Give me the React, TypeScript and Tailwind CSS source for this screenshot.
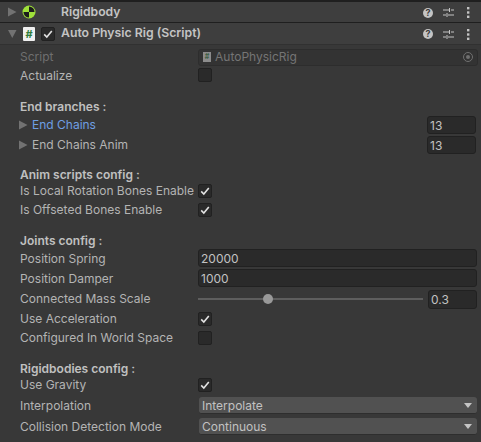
import type { ReactNode } from 'react';

const Arrow = ({ open = false }: { open?: boolean }) => (
  <svg width="10" height="10" viewBox="0 0 10 10" className="shrink-0">
    <path d={open ? 'M0 1h8.500L4.250 9z' : 'M0 .5v9L8.500 5z'} fill="#727272" />
  </svg>
);

const Check = () => (
  <svg width="10" height="10" viewBox="0 0 10 10">
    <path d="M1.2 5.400 3.800 8 8.800 2" fill="none" stroke="#e2e2e2" strokeWidth="1.600" />
  </svg>
);

const Checkbox = ({ checked = false }: { checked?: boolean }) => (
  <div className="w-[14px] h-[14px] rounded-[2px] bg-[#2a2a2a] border border-[#212121] flex items-center justify-center">
    {checked && <Check />}
  </div>
);

const HeaderIcons = () => (
  <div className="ml-auto flex items-center pr-[11px] mt-[1px]">
    <div className="w-[10px] h-[10px] rounded-full bg-[#c4c4c4] text-[#3e3e3e] text-[9px] leading-[10px] font-bold text-center">?</div>
    <svg width="11" height="11" viewBox="0 0 11 11" className="ml-[10px]">
      <path d="M0 3h6M8 3h3M0 8h3M5 8h6M6.500 1v4M4 6v4" stroke="#c4c4c4" strokeWidth="1" fill="none" />
    </svg>
    <svg width="3" height="11" viewBox="0 0 3 11" className="ml-[13px]">
      <rect x="0" y="0" width="2.400" height="2.400" fill="#c4c4c4" />
      <rect x="0" y="4.300" width="2.400" height="2.400" fill="#c4c4c4" />
      <rect x="0" y="8.600" width="2.400" height="2.400" fill="#c4c4c4" />
    </svg>
  </div>
);

const Row = ({ label, h = 'h-[18px]', dim = false, nudge = false, children }: { label: string; h?: string; dim?: boolean; nudge?: boolean; children?: ReactNode }) => (
  <div className={`flex items-center pl-[20px] ${h}`}>
    <div className={`w-[178px] shrink-0 whitespace-nowrap ${nudge ? 'pt-[2px]' : ''} ${dim ? 'text-[#6f6f6f]' : 'text-[#b4b4b4]'}`}>{label}</div>
    {children}
  </div>
);

const Heading = ({ text, className }: { text: string; className: string }) => (
  <div className={`pl-[20px] h-[14px] leading-[14px] font-semibold text-[#c0c0c0] ${className}`}>{text}</div>
);

const Field = ({ value }: { value: string }) => (
  <div className="flex-1 mr-[4px] h-[18px] leading-[17px] rounded-[3px] bg-[#2a2a2a] border border-[#212121] px-[2px] text-[#c2c2c2]">{value}</div>
);

const Dropdown = ({ value }: { value: string }) => (
  <div className="flex-1 ml-[1px] mr-[4px] h-[17px] rounded-[3px] bg-[#515151] border-b border-[#2e2e2e] pl-[3px] pr-[5px] text-[#c2c2c2] flex items-center justify-between">
    <span className="pt-[2px]">{value}</span>
    <svg width="8" height="5" viewBox="0 0 8 5"><path d="M0 0h8L4 5z" fill="#c4c4c4" /></svg>
  </div>
);

const Foldout = ({ label, blue = false, className = '' }: { label: string; blue?: boolean; className?: string }) => (
  <div className={`flex items-center h-[18px] pl-[19px] ${className}`}>
    <Arrow />
    <div className={`ml-[3px] ${blue ? 'text-[#6f9fe3]' : 'text-[#b4b4b4]'}`}>{label}</div>
    <div className="ml-auto mr-[5px] w-[49px] h-[18px] leading-[17px] rounded-[3px] bg-[#2a2a2a] border border-[#212121] px-[2px] text-[#c2c2c2]">13</div>
  </div>
);

export default function App() {
  return (
    <div className="w-[481px] h-[442px] overflow-hidden bg-[#383838] text-[12px] font-['Inter',sans-serif]">
      <div className="h-[2px] bg-[#1f1f1f]" />
      <div className="h-[21px] bg-[#3e3e3e] flex items-center pl-[8px] border-b border-[#1f1f1f]">
        <Arrow />
        <svg width="14" height="14" viewBox="0 0 14 14" className="ml-[4px]">
          <circle cx="7" cy="7" r="6.500" fill="#9fe03a" />
          <path d="M7 7V1.500A5.500 5.500 0 0 1 12.500 7zM7 7v5.500A5.500 5.500 0 0 1 1.500 7z" fill="#1c1c1c" />
        </svg>
        <div className="ml-[25px] font-semibold text-[#c4c4c4] text-[12.200px]">Rigidbody</div>
        <HeaderIcons />
      </div>
      <div className="h-[22px] bg-[#3e3e3e] flex items-center pl-[8px] border-b border-[#313131]">
        <Arrow open />
        <div className="ml-[5px] w-[12px] h-[14px] rounded-[1px] bg-[#f0f0f0] text-[#2f7d3a] text-[11px] leading-[14px] font-bold text-center">#</div>
        <div className="ml-[6px] w-[14px] h-[14px]"><Checkbox checked /></div>
        <div className="ml-[6px] font-semibold text-[#c4c4c4] text-[12.250px]">Auto Physic Rig (Script)</div>
        <HeaderIcons />
      </div>

      <div className="mt-[3px]">
        <Row label="Script" dim>
          <div className="flex-1 mr-[3px] h-[17px] rounded-[3px] bg-[#333333] border border-[#2d2d2d] flex items-center pl-[4px] text-[#757575]">
            <div className="w-[8px] h-[10px] bg-[#8c8c8c] text-[#3f5f45] text-[7px] leading-[10px] font-bold text-center">#</div>
            <span className="ml-[4px]">AutoPhysicRig</span>
            <div className="ml-auto mr-[4px] w-[10px] h-[10px] rounded-full border border-[#707070] flex items-center justify-center">
              <div className="w-[4px] h-[4px] rounded-full bg-[#707070]" />
            </div>
          </div>
        </Row>
        <Row label="Actualize" nudge><Checkbox /></Row>

        <Heading text="End branches :" className="mt-[16px]" />
        <Foldout label="End Chains" blue className="mt-[2px]" />
        <Foldout label="End Chains Anim" className="mt-[2px]" />

        <Heading text="Anim scripts config :" className="mt-[14px]" />
        <Row label="Is Local Rotation Bones Enable"><Checkbox checked /></Row>
        <Row label="Is Offseted Bones Enable" h="h-[19px]"><Checkbox checked /></Row>

        <Heading text="Joints config :" className="mt-[15px]" />
        <Row label="Position Spring" nudge h="h-[18px] mt-[1px]"><Field value="20000" /></Row>
        <Row label="Position Damper" nudge h="h-[18px] mt-[2px]"><Field value="1000" /></Row>
        <Row label="Connected Mass Scale" h="h-[20px] mt-[2px]">
          <div className="relative w-[225px] h-[2px] bg-[#5e5e5e]">
            <div className="absolute left-[65px] top-[-4px] w-[10px] h-[10px] rounded-full bg-[#999999]" />
          </div>
          <div className="ml-[5px] mr-[4px] flex-1 h-[19px] leading-[18px] rounded-[3px] bg-[#2a2a2a] border border-[#212121] px-[2px] text-[#c2c2c2]">0.3</div>
        </Row>
        <Row label="Use Acceleration" h="h-[19px]"><Checkbox checked /></Row>
        <Row label="Configured In World Space" h="h-[19px]"><Checkbox /></Row>

        <Heading text="Rigidbodies config :" className="mt-[15px]" />
        <Row label="Use Gravity"><Checkbox checked /></Row>
        <Row label="Interpolation" h="h-[17px] mt-[3px]"><Dropdown value="Interpolate" /></Row>
        <Row label="Collision Detection Mode" h="h-[17px] mt-[4px]"><Dropdown value="Continuous" /></Row>
      </div>
    </div>
  );
}
